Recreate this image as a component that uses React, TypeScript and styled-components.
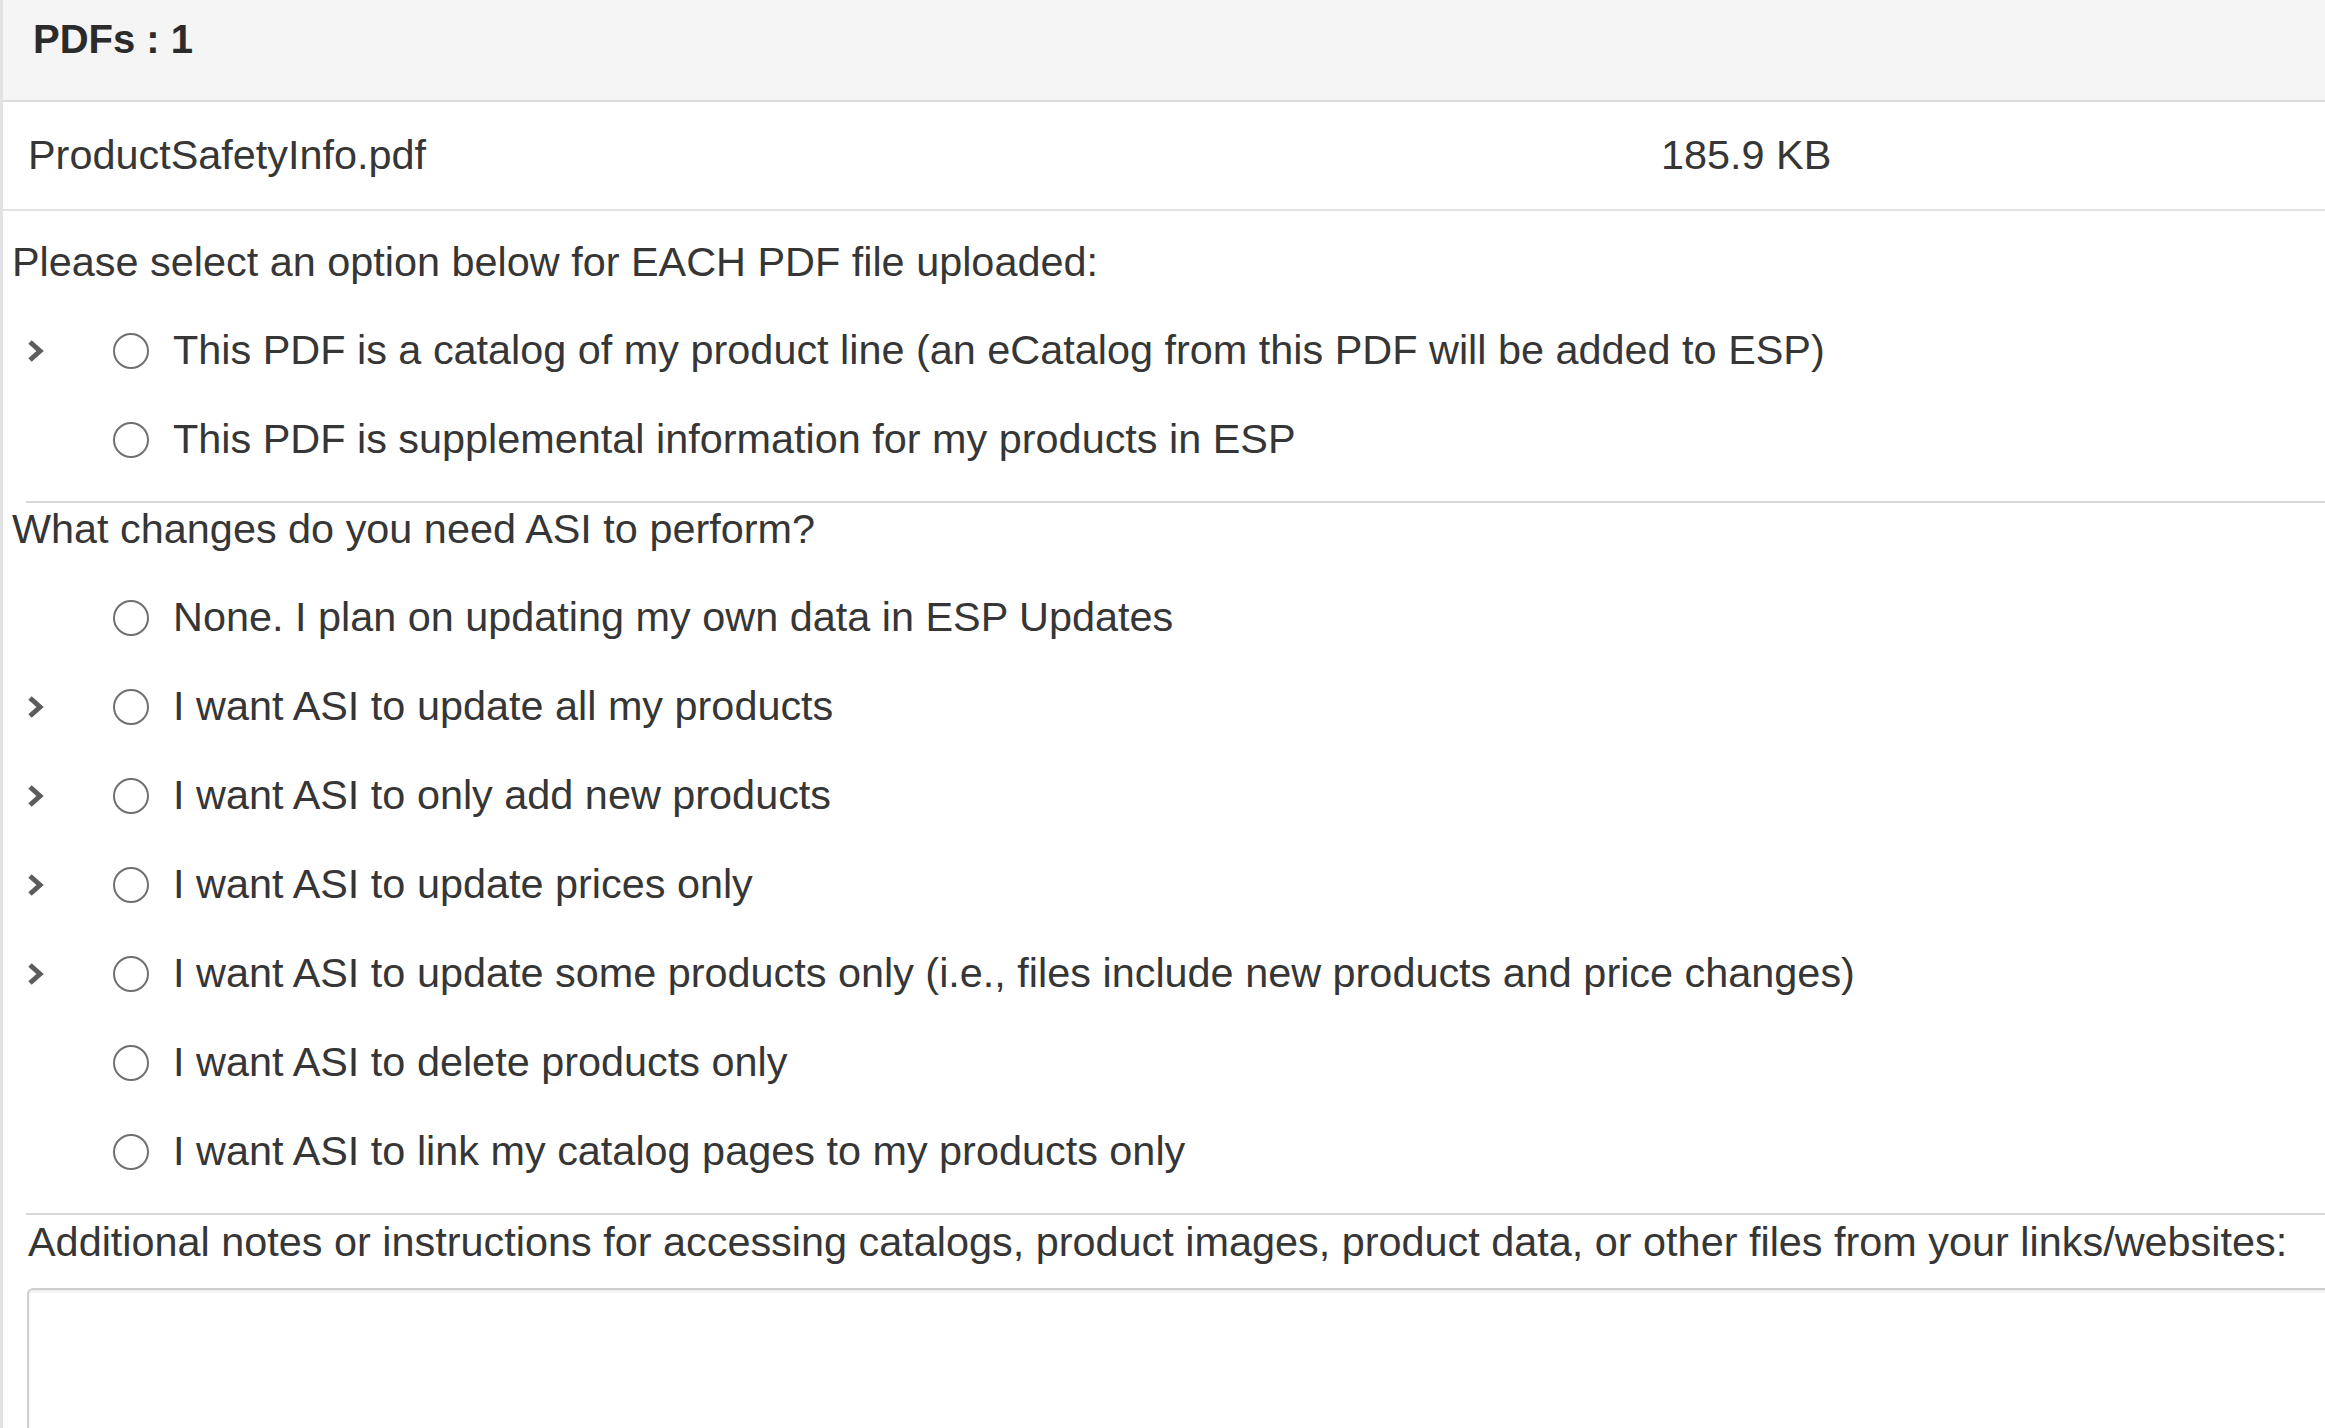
import React from 'react';
import styled, { createGlobalStyle } from 'styled-components';

const GlobalStyle = createGlobalStyle`
  html, body {
    margin: 0;
    padding: 0;
    background: #fff;
    overflow: hidden;
  }
  body {
    font-family: "Liberation Sans", Arial, sans-serif;
    color: #363636;
  }
`;

type Option = { label: string; expandable?: boolean };

const pdfOptions: Option[] = [
  { label: 'This PDF is a catalog of my product line (an eCatalog from this PDF will be added to ESP)', expandable: true },
  { label: 'This PDF is supplemental information for my products in ESP' },
];

const changeOptions: Option[] = [
  { label: 'None. I plan on updating my own data in ESP Updates' },
  { label: 'I want ASI to update all my products', expandable: true },
  { label: 'I want ASI to only add new products', expandable: true },
  { label: 'I want ASI to update prices only', expandable: true },
  { label: 'I want ASI to update some products only (i.e., files include new products and price changes)', expandable: true },
  { label: 'I want ASI to delete products only' },
  { label: 'I want ASI to link my catalog pages to my products only' },
];

const Chevron: React.FC = () => (
  <svg width="18" height="24" viewBox="0 0 18 24">
    <polyline points="3,3 13,12 3,21" fill="none" stroke="#5c5c5c" strokeWidth="5" />
  </svg>
);

const OptionGroup: React.FC<{ name: string; options: Option[] }> = ({ name, options }) => (
  <S.OptionList>
    {options.map((o) => (
      <S.OptionRow key={o.label}>
        <S.ToggleSlot>{o.expandable && <Chevron />}</S.ToggleSlot>
        <S.Radio type="radio" name={name} />
        <S.OptionLabel>{o.label}</S.OptionLabel>
      </S.OptionRow>
    ))}
  </S.OptionList>
);

const App: React.FC = () => {
  return (
    <>
      <GlobalStyle />
      <S.Panel>
        <S.Heading>PDFs : 1</S.Heading>
        <S.FileRow>
          <S.FileName>ProductSafetyInfo.pdf</S.FileName>
          <S.FileSize>185.9 KB</S.FileSize>
        </S.FileRow>

        <S.Question $top={28}>Please select an option below for EACH PDF file uploaded:</S.Question>
        <OptionGroup name="pdf-type" options={pdfOptions} />
        <S.Divider />

        <S.Question $top={3}>What changes do you need ASI to perform?</S.Question>
        <OptionGroup name="changes" options={changeOptions} />
        <S.Divider />

        <S.NotesLabel>
          Additional notes or instructions for accessing catalogs, product images, product data, or other files from your links/websites:
        </S.NotesLabel>
        <S.Notes />
      </S.Panel>
    </>
  );
};

const S = {
  Panel: styled.div`
    width: 2360px;
    min-height: 1428px;
    border-left: 3px solid #e2e2e2;
    font-size: 41.4px;
    line-height: 47px;
  `,
  Heading: styled.div`
    height: 102px;
    box-sizing: border-box;
    padding: 16px 0 0 30px;
    background: #f5f5f5;
    border-bottom: 2px solid #dcdcdc;
    font-weight: 700;
    font-size: 40px;
    color: #2b2b2b;
  `,
  FileRow: styled.div`
    display: flex;
    align-items: center;
    height: 107px;
    border-bottom: 2px solid #e2e2e2;
  `,
  FileName: styled.span`
    width: 1658px;
    padding-left: 25px;
    box-sizing: border-box;
  `,
  FileSize: styled.span``,
  Question: styled.div<{ $top: number }>`
    margin-top: ${(p) => p.$top}px;
    padding-left: 9px;
  `,
  OptionList: styled.div`
    margin-top: 20px;
  `,
  OptionRow: styled.div`
    display: flex;
    align-items: center;
    height: 89px;
  `,
  ToggleSlot: styled.span`
    display: flex;
    align-items: center;
    width: 86px;
    margin-left: 24px;
  `,
  Radio: styled.input`
    appearance: none;
    margin: 0;
    width: 36px;
    height: 36px;
    box-sizing: border-box;
    border: 2px solid #707070;
    border-radius: 50%;
    background: #fff;
  `,
  OptionLabel: styled.span`
    margin-left: 24px;
  `,
  Divider: styled.div`
    margin: 17px 0 0 23px;
    border-top: 2px solid #d8d8d8;
  `,
  NotesLabel: styled.div`
    margin: 4px 0 0 25px;
  `,
  Notes: styled.textarea`
    display: block;
    margin: 22px 0 0 24px;
    width: 2400px;
    height: 260px;
    box-sizing: border-box;
    border: 2px solid #cfcfcf;
    border-radius: 6px;
    box-shadow: inset 0 2px 3px rgba(0, 0, 0, 0.08);
    resize: none;
    font: inherit;
  `,
};

export default App;
